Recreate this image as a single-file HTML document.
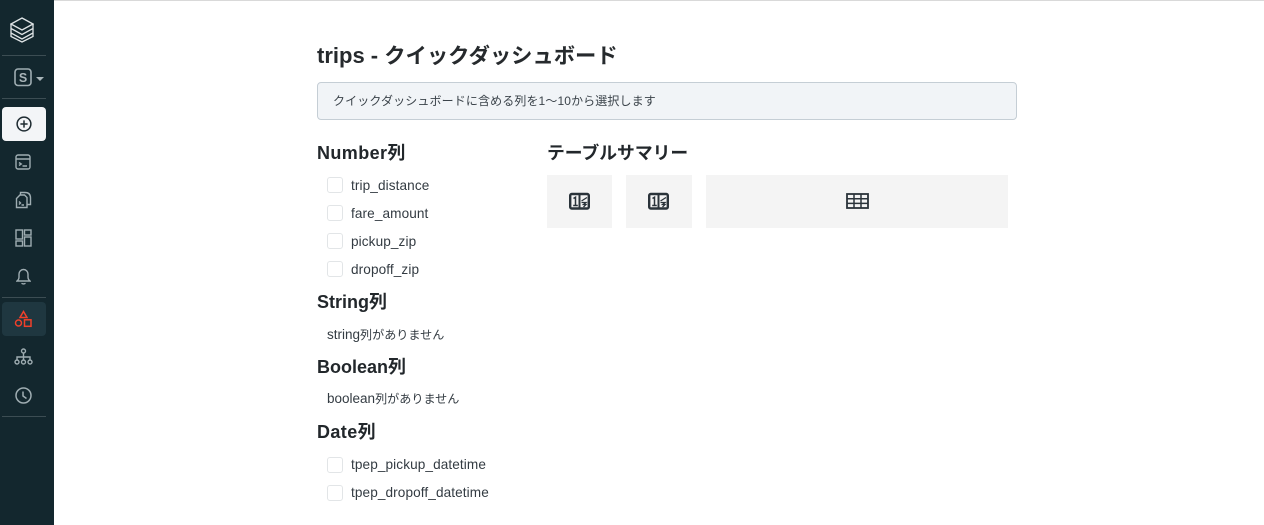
<!DOCTYPE html>
<html lang="ja"><head><meta charset="utf-8"><title>trips</title>
<style>
*{box-sizing:border-box}
html,body{margin:0;padding:0;width:1264px;height:525px;overflow:hidden;background:#fff;font-family:"Liberation Sans","Noto Sans CJK JP",sans-serif;color:#22272b}
.abs{position:absolute;white-space:nowrap}
#top{position:absolute;left:0;top:0;width:1264px;height:1px;background:#d9d9d9}
#side{position:absolute;left:0;top:0;width:54px;height:525px;background:#13272e}
.sep{position:absolute;left:2px;width:44px;height:1px;background:#3c4d53}
#side svg{position:absolute;fill:none;stroke:#9fadb2;stroke-width:1.4}
.h{position:absolute;left:317px;font-size:18px;font-weight:700;line-height:24px;color:#22272b;white-space:nowrap}
.cb{position:absolute;left:327px;width:16px;height:16px;border:1px solid #e2e5e7;border-radius:3px;background:#fff}
.l{position:absolute;left:351px;font-size:13.6px;letter-spacing:.1px;line-height:18px;color:#333b42;white-space:nowrap}
.n{position:absolute;left:327px;font-size:13.5px;line-height:18px;color:#333b42;white-space:nowrap}
.n span{font-size:12.1px}
.card{position:absolute;top:175px;height:53px;background:#f4f4f4}
.card svg{position:absolute;top:16px;fill:none;stroke:#2a333a}
</style></head><body>
<div id="top"></div>
<div id="side">
<svg style="left:10px;top:17px;stroke:#dfe4e6;stroke-width:1.3" width="24" height="26" viewBox="0 0 24 26" stroke-linejoin="miter"><path d="M12 1 23 7 12 13 1 7Z"/><path d="M1 7V11.500L12 17.500 23 11.500V7M1 11.500V16L12 22 23 16V11.500M1 16V19.500L12 25 23 19.500V16"/></svg>
<div class="sep" style="top:55px"></div>
<svg style="left:14px;top:68px" width="18" height="19" viewBox="0 0 18 19"><rect x="1" y="1" width="16" height="16.5" rx="3" stroke-width="1.6"/><text x="9" y="14" font-family="Liberation Sans" font-weight="700" font-size="12.5" text-anchor="middle" fill="#a9b5b9" stroke="none">S</text></svg>
<div class="abs" style="left:36px;top:77px;width:0;height:0;border-left:4px solid transparent;border-right:4px solid transparent;border-top:4px solid #a9b5b9"></div>
<div class="sep" style="top:98px"></div>
<div class="abs" style="left:2px;top:107px;width:44px;height:34px;background:#f3f5f7;border-radius:4px"></div>
<svg style="left:16px;top:116px;stroke:#1e2b31;stroke-width:1.500" width="16" height="16" viewBox="0 0 16 16"><circle cx="8" cy="8" r="6.900"/><path d="M8 4.400V11.600M4.400 8H11.600"/></svg>
<svg style="left:15px;top:154px" width="16" height="16" viewBox="0 0 16 16"><rect x="1" y="1" width="14" height="14" rx="2"/><path d="M1 5H15M4 8.500 6.200 10 4 11.500M7.500 12H12"/></svg>
<svg style="left:15px;top:191px" width="17" height="18" viewBox="0 0 17 18"><path d="M5 4H9.500L12 6.500V16.500H1.500V7.500Z"/><path d="M5.500 4V1.500H10Q15.500 1.500 15.500 7V13.500H12"/><path d="M4 10.500 5.500 12 4 13.500M6.500 14H9"/></svg>
<svg style="left:15px;top:229px" width="17" height="18" viewBox="0 0 17 18"><rect x="1" y="1" width="6.500" height="9"/><rect x="9.500" y="1" width="6.500" height="5"/><rect x="1" y="12" width="6.500" height="5"/><rect x="9.500" y="8" width="6.500" height="9"/></svg>
<svg style="left:16px;top:268px" width="15" height="17" viewBox="0 0 15 17"><path d="M1 13H14Q12 11.500 12 9V6A4.500 4.500 0 0 0 3 6V9Q3 11.500 1 13ZM5.500 15.300Q7.500 16.500 9.500 15.300"/></svg>
<div class="sep" style="top:297px"></div>
<div class="abs" style="left:2px;top:302px;width:44px;height:34px;background:#1f3740;border-radius:4px"></div>
<svg style="left:14px;top:310px;stroke:#f0402a;stroke-width:1.500" width="19" height="18" viewBox="0 0 19 18"><path d="M9.500 1.500 13 7.500H6Z"/><circle cx="4.500" cy="13" r="3"/><rect x="10.500" y="9.800" width="6.500" height="6.500"/></svg>
<svg style="left:14px;top:348px" width="19" height="18" viewBox="0 0 19 18"><circle cx="9.500" cy="3" r="2"/><path d="M9.500 5V12M3 12V9H16V12"/><circle cx="3" cy="14" r="2"/><circle cx="9.500" cy="14" r="2"/><circle cx="16" cy="14" r="2"/></svg>
<svg style="left:15px;top:387px" width="17" height="17" viewBox="0 0 17 17"><circle cx="8.500" cy="8.500" r="7.500" stroke-width="1.500"/><path d="M8 4.500V9L11.500 11.500" stroke-width="1.500"/></svg>
<div class="sep" style="top:416px"></div>
</div>

<div class="abs" style="left:317px;top:41px;font-size:21.3px;line-height:30px;font-weight:700;color:#262a2d"><span style="font-size:22px">trips - </span>クイックダッシュボード</div>
<div class="abs" style="left:317px;top:82px;width:700px;height:38px;background:#f1f4f7;border:1px solid #c5ced5;border-radius:4px"></div>
<div class="abs" style="left:333px;top:92px;font-size:12px;letter-spacing:.12px;line-height:18px;color:#3b434a">クイックダッシュボードに含める列を1〜10から選択します</div>

<div class="h" style="top:141px"><span style="letter-spacing:.4px">Number</span>列</div>
<div class="cb" style="top:177px"></div><div class="l" style="top:177px">trip_distance</div>
<div class="cb" style="top:205px"></div><div class="l" style="top:205px">fare_amount</div>
<div class="cb" style="top:233px"></div><div class="l" style="top:233px">pickup_zip</div>
<div class="cb" style="top:261px"></div><div class="l" style="top:261px">dropoff_zip</div>
<div class="h" style="top:290px">String列</div>
<div class="n" style="top:326px">string<span>列がありません</span></div>
<div class="h" style="top:355px">Boolean列</div>
<div class="n" style="top:390px">boolean<span>列がありません</span></div>
<div class="h" style="top:420px"><span style="letter-spacing:.4px">Date</span>列</div>
<div class="cb" style="top:457px"></div><div class="l" style="top:456px">tpep_pickup_datetime</div>
<div class="cb" style="top:485px"></div><div class="l" style="top:484px">tpep_dropoff_datetime</div>

<div class="h" style="left:547px;top:141px;font-size:17.8px">テーブルサマリー</div>
<div class="card" style="left:547px;width:65px"><svg style="left:22px" width="21" height="20" viewBox="0 0 21 20"><rect x="1.200" y="3" width="18.600" height="14.500" rx="1.500" stroke-width="2.400"/><path d="M10.500 2.500V17.500" stroke-width="2"/><path d="M4.500 7.500 6.500 6.200V14.500M4.200 14.500H8.800" stroke-width="1.500"/><path d="M12.500 10 18 6.500M12.500 11.500H17L14.500 13.500H17L14.500 16" stroke-width="1.300"/></svg></div>
<div class="card" style="left:626px;width:66px"><svg style="left:22px" width="21" height="20" viewBox="0 0 21 20"><rect x="1.200" y="3" width="18.600" height="14.500" rx="1.500" stroke-width="2.400"/><path d="M10.500 2.500V17.500" stroke-width="2"/><path d="M4.500 7.500 6.500 6.200V14.500M4.200 14.500H8.800" stroke-width="1.500"/><path d="M12.500 10 18 6.500M12.500 11.500H17L14.500 13.500H17L14.500 16" stroke-width="1.300"/></svg></div>
<div class="card" style="left:706px;width:302px"><svg style="left:140px" width="23" height="20" viewBox="0 0 23 20"><rect x="1" y="3" width="21" height="14" stroke-width="1.800"/><path d="M1 7.800H22M1 12.400H22M8 3V17M15 3V17" stroke-width="1.500"/></svg></div>
</body></html>
